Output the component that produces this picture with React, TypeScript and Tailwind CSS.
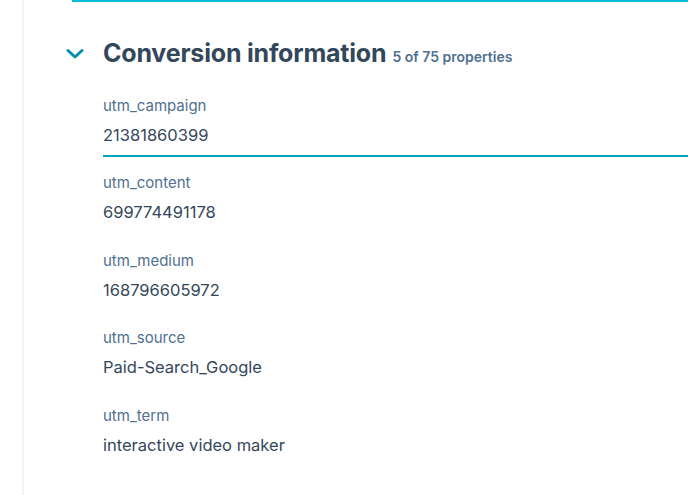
const fields = [
  { label: "utm_campaign", value: "21381860399", active: true },
  { label: "utm_content", value: "699774491178" },
  { label: "utm_medium", value: "168796605972" },
  { label: "utm_source", value: "Paid-Search_Google" },
  { label: "utm_term", value: "interactive video maker" },
];

export default function App() {
  return (
    <div
      className="w-[688px] h-[495px] bg-white flex overflow-hidden"
      style={{ fontFamily: "Inter, 'Noto Sans', sans-serif" }}
    >
      <div className="w-[22px] shrink-0 bg-white" />
      <div className="flex-1 border-l-2 border-[#f3f4f5] flex flex-col">
        <div className="ml-[48px] h-[2px] bg-[#00bcd6]" />

        <div className="flex items-center pl-[42px] mt-[33px]">
          <svg width="18" height="12" viewBox="0 0 18 12" className="shrink-0">
            <path
              d="M2 2.5 L9 9 L16 2.5"
              fill="none"
              stroke="#0091ae"
              strokeWidth="3"
              strokeLinecap="round"
              strokeLinejoin="round"
            />
          </svg>
          <h2 className="ml-[19px] text-[25px] font-bold text-[#33475b] tracking-[-0.2px]">
            Conversion information
          </h2>
          <span className="ml-[6px] mt-[5px] text-[14px] font-semibold text-[#516f90]">
            5 of 75 properties
          </span>
        </div>

        <div className="pl-[79px] mt-[23px] flex flex-col">
          {fields.map((f) => (
            <div key={f.label} className="flex flex-col h-[77.5px]">
              <span className="text-[15px] text-[#516f90] leading-[20px]">{f.label}</span>
              <span className="mt-[8px] text-[16.5px] text-[#33475b] leading-[22px]">{f.value}</span>
              {f.active && <div className="mt-[9px] h-[2px] bg-[#00a4bd]" />}
            </div>
          ))}
        </div>
      </div>
    </div>
  );
}
